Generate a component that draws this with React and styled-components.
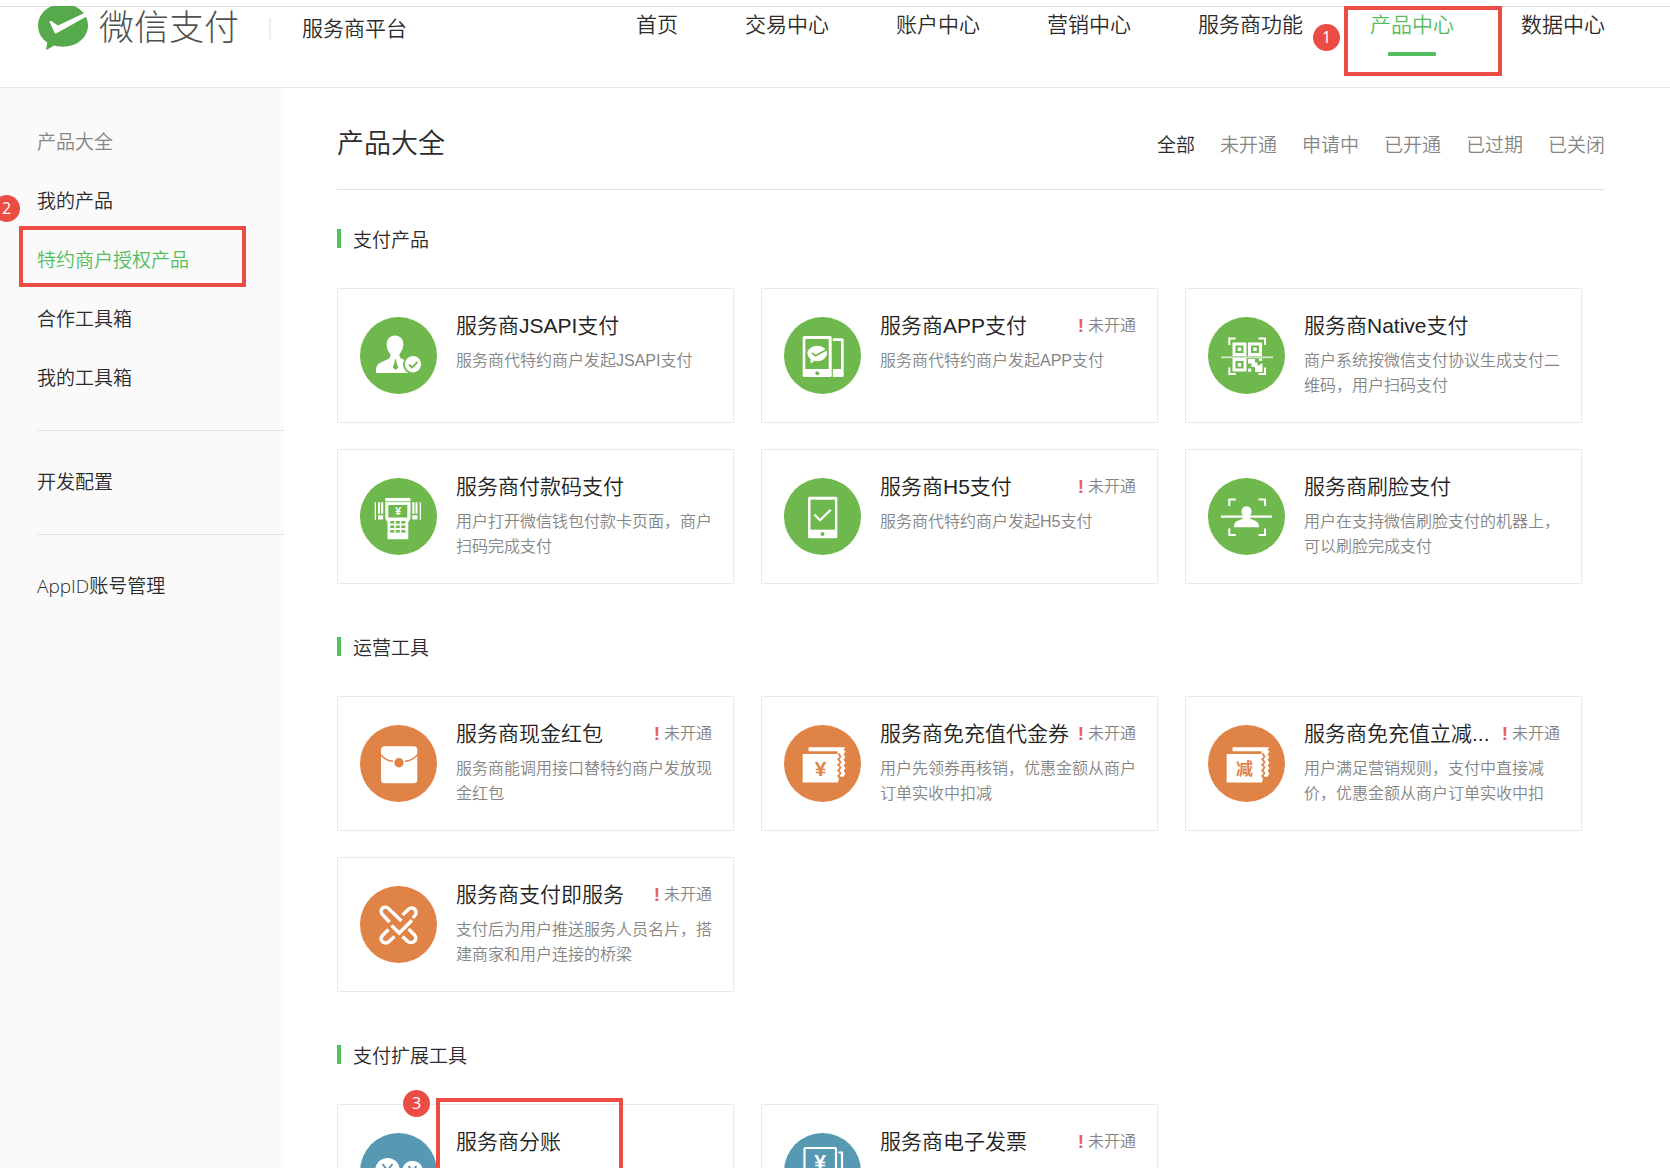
import React from 'react'
import styled, { createGlobalStyle, ThemeProvider } from 'styled-components'

const theme = {
    colors: {
        green: '#54bd60',
        iconGreen: '#6fb84d',
        iconOrange: '#e08346',
        iconBlue: '#5798b2',
        red: '#eb4d45',
        text: '#2b2b2b',
        muted: '#858585',
        line: '#e0e0e2',
        cardLine: '#e9e9ee',
    },
}

const GlobalStyle = createGlobalStyle`
    * {
        box-sizing: border-box;
    }

    body {
        margin: 0;
        background: #fff;
        color: #2b2b2b;
        font-family: "Liberation Sans", "Noto Sans CJK SC", sans-serif;
        font-weight: 350;
    }

    ul {
        list-style: none;
        margin: 0;
        padding: 0;
    }

    a {
        color: inherit;
        text-decoration: none;
    }
`

const Page = styled.div`
    min-height: 100vh;
    display: flex;
    flex-direction: column;
    padding-top: 6px;
    overflow-x: hidden;
`

const Header = styled.header`
    flex: none;
    display: flex;
    justify-content: space-between;
    align-items: flex-start;
    height: 82px;
    padding: 0 65px 0 38px;
    border-top: 1px solid ${p => p.theme.colors.line};
    border-bottom: 1px solid ${p => p.theme.colors.cardLine};
`

const Brand = styled.a`
    display: flex;
    align-items: center;
    height: 42px;
`

const Wordmark = styled.span`
    margin-left: 11px;
    font-size: 35px;
    line-height: 40px;
    font-weight: 300;
    color: #505050;
`

const Platform = styled.span`
    margin-left: 30px;
    padding-left: 31px;
    border-left: 2px solid #ececec;
    font-size: 21px;
    line-height: 21px;
`

const NavList = styled.ul`
    display: flex;
    gap: 67px;
`

const NavItem = styled.li`
    position: relative;
`

const NavLink = styled.a`
    display: flex;
    flex-direction: column;
    align-items: center;
    font-size: 21px;
    line-height: 36px;
    white-space: nowrap;
    color: ${p => p.$active ? p.theme.colors.green : 'inherit'};
`

const Underline = styled.span`
    width: 48px;
    height: 4px;
    margin-top: 9px;
    border-radius: 1px;
    background: ${p => p.theme.colors.green};
`

// numbered steps drawn over the page
const StepFrame = styled.span`
    position: absolute;
    z-index: 1;
    left: ${p => p.$left}px;
    top: ${p => p.$top}px;
    width: ${p => p.$width}px;
    height: ${p => p.$height}px;
    border: 4px solid ${p => p.theme.colors.red};
    pointer-events: none;
`

const StepBadge = styled.span`
    position: absolute;
    z-index: 1;
    left: ${p => p.$left}px;
    top: ${p => p.$top}px;
    width: 27px;
    height: 27px;
    border-radius: 50%;
    background: ${p => p.theme.colors.red};
    color: #fff;
    font-family: "Open Sans", sans-serif;
    font-size: 16px;
    font-weight: 400;
    line-height: 27px;
    text-align: center;
`

const Body = styled.div`
    flex: 1;
    display: flex;
`

const Sidebar = styled.nav`
    flex: none;
    width: 284px;
    padding: 25px 0 0 37px;
    background: #fafafa;
    font-family: "Open Sans", "Noto Sans CJK SC", sans-serif;
`

const SideGroup = styled.ul`
    & + & {
        margin-top: 22px;
        padding-top: 22px;
        border-top: 1px solid #e4e4e6;
    }
`

const SideItem = styled.li`
    position: relative;
    font-size: 19px;
    line-height: 59px;
    color: ${p => p.$heading ? p.theme.colors.muted : p.$active ? p.theme.colors.green : 'inherit'};
`

const Main = styled.main`
    flex: 1;
    min-width: 0;
    padding: 0 65px 0 53px;
`

const TitleBar = styled.div`
    display: flex;
    justify-content: space-between;
    align-items: center;
    height: 102px;
    padding-top: 11px;
    border-bottom: 1px solid ${p => p.theme.colors.line};
`

const PageTitle = styled.h1`
    margin: 0;
    font-size: 27px;
    line-height: 36px;
    font-weight: 350;
`

const Filters = styled.div`
    display: flex;
    gap: 25px;
    padding-top: 4px;
`

const Filter = styled.button`
    padding: 0;
    border: 0;
    background: none;
    font: inherit;
    font-size: 19px;
    line-height: 28px;
    color: ${p => p.$active ? p.theme.colors.text : p.theme.colors.muted};
`

const Section = styled.section`
    padding: 36px 23px 0 0;
`

const SectionTitle = styled.h2`
    display: flex;
    align-items: center;
    gap: 12px;
    height: 25px;
    margin: 0 0 37px;
    font-size: 19px;
    font-weight: 350;

    &::before {
        content: "";
        width: 4px;
        height: 19px;
        background: ${p => p.theme.colors.green};
    }
`

const Grid = styled.div`
    display: grid;
    grid-template-columns: repeat(3, 1fr);
    gap: 26px 27px;
    margin-bottom: 14px;
`

const Card = styled.article`
    position: relative;
    display: flex;
    gap: 19px;
    height: 135px;
    padding: 0 21px 0 22px;
    border: 1px solid ${p => p.theme.colors.cardLine};
`

const IconSvg = styled.svg`
    flex: none;
    align-self: center;
    width: 77px;
    height: 77px;
`

const CardBody = styled.div`
    flex: 1;
    min-width: 0;
    padding-top: 22px;
`

const CardHead = styled.div`
    display: flex;
    justify-content: space-between;
    align-items: center;
    height: 30px;
`

const CardTitle = styled.h3`
    margin: 0;
    font-size: 21px;
    line-height: 30px;
    font-weight: 350;
    color: #222;
    white-space: nowrap;
`

const Status = styled.span`
    display: flex;
    align-items: center;
    gap: 4px;
    font-size: 16px;
    line-height: 30px;
    color: ${p => p.theme.colors.muted};
    white-space: nowrap;
`

const Mark = styled.b`
    font-size: 19px;
    color: #e8605f;
`

const Desc = styled.p`
    margin: 7px 0 0;
    font-size: 16px;
    line-height: 25px;
    color: ${p => p.theme.colors.muted};
`

const Logo = () => (
    <svg width="50" height="44" viewBox="0 0 50 44" aria-hidden="true">
        <path
            d="M14 0H36C44.5 3.5 50 11 50 19.5C50 31.5 39 40.7 25 40.7C21.5 40.7 18.5 40.3 16 39.5L9.5 43.6C8.5 44 8 43.5 8.2 42.7L9.3 36.5C3.5 32.5 0 26.5 0 19.5C0 11 5.5 3.5 14 0Z"
            fill="#57aa4b"
        />
        <path d="M11.3 15.5C12.5 14.5 13.5 15 14.5 15.8L20 19.5L47.5 6.5L49.5 10L18.5 27.3C17.5 27.8 17 27.5 16.5 26.5Z" fill="#fff" />
    </svg>
)

const PersonIcon = ({ bg }) => (
    <>
        <path d="M35 18.5c5 0 8.500 3.700 8.300 9c-.2 5-2.500 7.500-3.800 9.500c-.3 3 1 4.500 4 5.500l5 3v10.500H16.200c-1-6 1.300-9 5-10.700l6-2.800c3-1.300 3.500-3 3.200-5.500c-1.500-2-3.600-4.500-3.700-9.500c-.1-5.300 3.300-9 8.300-9z" fill="#fff" />
        <path d="M34.5 42.5h2l-.3 2l2 6l-2.700 2.500l-2.700-2.500l2-6z" fill={bg} />
        <circle cx="53" cy="47.3" r="10" fill={bg} />
        <circle cx="53" cy="47.3" r="8.2" fill="#fff" />
        <path d="M49 47.5l3 3l5.500-5.500" fill="none" stroke={bg} strokeWidth="1.8" />
    </>
)

const PhonesIcon = ({ bg }) => (
    <>
        <rect x="45" y="21.3" width="14.7" height="38.7" rx="1.5" fill="#fff" />
        <rect x="45" y="24" width="12" height="28" fill={bg} />
        <rect x="46" y="19" width="2.8" height="42" fill={bg} />
        <rect x="18.7" y="19" width="29" height="41" rx="1.5" fill="#fff" />
        <rect x="21.3" y="22" width="23.4" height="30" fill={bg} />
        <path d="M26.5 42.5v4l4-2.300z" fill="#fff" />
        <ellipse cx="33.2" cy="36.5" rx="9.8" ry="7.8" fill="#fff" />
        <path d="M28 36l3.500 2.700l11-6" fill="none" stroke={bg} strokeWidth="1.7" />
        <circle cx="33.3" cy="56.2" r="2" fill={bg} />
    </>
)

const Corners = () => (
    <path
        d="M21.3 28v-6.500h6.500M50.5 21.5h6.500v6.500M57 50.5v6.500h-6.500M27.8 57h-6.500v-6.500"
        fill="none"
        stroke="#fff"
        strokeWidth="2"
    />
)

const QrIcon = () => (
    <>
        <Corners />
        <g fill="none" stroke="#fff" strokeWidth="3">
            <rect x="26" y="27" width="11" height="10.5" />
            <rect x="41.5" y="27" width="11" height="10.5" />
            <rect x="26" y="42.5" width="11" height="10.5" />
        </g>
        <g fill="#fff">
            <rect x="29.8" y="30.5" width="3.5" height="3.5" />
            <rect x="45.2" y="30.5" width="3.5" height="3.5" />
            <rect x="29.8" y="46" width="3.5" height="3.5" />
            <path d="M40 42h7v3.500h2.500v3.500l5-3v9h-7.500v-5h-3.500v-3.500H40z" />
            <rect x="51" y="41.5" width="3.2" height="2.5" />
            <rect x="40" y="51.5" width="3.2" height="3.2" />
            <rect x="13" y="39.3" width="52" height="2" opacity=".65" />
        </g>
    </>
)

const TerminalIcon = ({ bg }) => (
    <>
        <path d="M26.3 20h23.200c.6 0 1 .4 1 1v19.500l-2.200 3.500v17.300H27.5V44l-2.200-3.500V21c0-.6.4-1 1-1z" fill="#fff" />
        <path d="M25.3 23.7h25.200" stroke={bg} strokeWidth=".8" />
        <rect x="28.3" y="27" width="19" height="12.5" fill={bg} />
        <text x="38" y="37.3" fill="#fff" fontSize="11" fontWeight="700" textAnchor="middle">¥</text>
        <g fill={bg}>
            {[43, 47.5, 52].map(y => [30.3, 35.8, 41.3].map(x => (
                <rect key={`${x}-${y}`} x={x} y={y} width="4" height="2.6" />
            )))}
        </g>
        <g fill="#fff">
            <path d="M14.7 24.3h1.300v17.400h-1.300zM18 24.3h2v11.500h-2zM21 24.3h2.200v11.500H21zM18 37.3h5.200v4.300H18z" />
            <path d="M59.7 24.3H61v17.400h-1.300zM52.3 24.3h2.200v11.500h-2.200zM55.5 24.3h2v11.500h-2zM52.3 37.3h5.200v4.300h-5.200z" />
        </g>
    </>
)

const PhoneCheckIcon = ({ bg }) => (
    <>
        <rect x="24" y="18.7" width="29.3" height="41.6" rx="1.5" fill="#fff" />
        <rect x="26.5" y="21.7" width="24.5" height="30" fill={bg} />
        <path d="M30.3 36.5l5.700 5.700l10.800-10.500" fill="none" stroke="#fff" strokeWidth="2.2" />
        <circle cx="38.5" cy="56" r="2" fill={bg} />
    </>
)

const FaceIcon = () => (
    <>
        <Corners />
        <path d="M13 38.7h51" stroke="#fff" strokeWidth="2.2" />
        <path d="M38.5 28.3c3 0 5 2 5 5c0 3-1.200 4.500-2 5.500c.2 2 1.500 2.500 4.500 3.500c3.500 1.200 5 3 5 7H26c0-4 1.500-5.800 5-7c3-1 4.300-1.500 4.500-3.500c-.8-1-2-2.500-2-5.500c0-3 2-5 5-5z" fill="#fff" />
    </>
)

const PacketIcon = ({ bg }) => (
    <>
        <rect x="21" y="21.3" width="36.3" height="37" rx="3.5" fill="#fff" />
        <path d="M20.5 29.5Q26 36 33 36.2M57.8 29.5Q52 36 45 36.2" fill="none" stroke={bg} strokeWidth="1.5" />
        <circle cx="39" cy="37.7" r="4.7" fill={bg} />
    </>
)

const LinkIcon = () => (
    <g fill="none" stroke="#fff" strokeWidth="3.4">
        <path d="M29.5 36L22.5 28.5C18 23.5 25 18.5 29 23L41.5 35" />
        <path d="M42.5 29L48.5 23.2C53 19 58.5 25.5 55 29.5L52.8 32" />
        <path d="M31.5 39.5L39.3 47L52 34.2" />
        <path d="M28.5 43.5L22.5 49.5C18 54.5 25 59.5 29 55.5L34.5 50.5" />
        <path d="M42.5 50.5L47.5 55.3C52.5 59.5 58.5 53 54.5 49L48.5 43" />
    </g>
)

const Ticket = ({ bg, label, size, baseline }) => (
    <>
        <path d="M24.5 22.3h37l-2 2.500l2 2l-2 2.500l2 3l-2 2.500l2 3l-2 2.500l2 3l-2 2.500l2 3l-2 3h-6V26.3h-29z" fill="#fff" />
        <path d="M18.7 30c0-.6.4-1 1-1H53l2 2.500l-2 3l2 2.500l-2 3l2 2.500l-2 3l2 2.500l-2 3l2 2.500l-1 4H18.7z" fill="#fff" />
        <path d="M54.5 28.5l2 3l-2 3l2 2.500l-2 3l2 2.500l-2 3l2 2.500l-2 3l2 2.500" fill="none" stroke={bg} strokeWidth="1.8" />
        <text x="36.5" y={baseline} fill={bg} fontSize={size} fontWeight="700" textAnchor="middle">{label}</text>
    </>
)

const CouponIcon = ({ bg }) => <Ticket bg={bg} label="¥" size="21" baseline="50.5" />
const DiscountIcon = ({ bg }) => <Ticket bg={bg} label="减" size="17" baseline="49.5" />

const SplitIcon = ({ bg }) => (
    <>
        <circle cx="27.5" cy="37.3" r="12.3" fill="#fff" />
        <circle cx="52.5" cy="38.2" r="10.5" fill="#fff" />
        <g fill="none" stroke={bg} strokeWidth="2">
            <path d="M22.5 31l5 6.500l5-6.500M27.5 37.5v9M23 39h9M23 43h9" />
            <path d="M48.5 33l4 5l4-5M52.5 38v8M49 40h7M49 43.5h7" />
        </g>
    </>
)

const InvoiceIcon = () => (
    <>
        <g fill="none" stroke="#fff" strokeWidth="2.2">
            <rect x="20.5" y="15" width="31.5" height="42" rx="1" />
            <path d="M54.5 19.5h3.500v34h-3.500M27 44h18M27 50h18" />
        </g>
        <text x="36" y="35.5" fill="#fff" fontSize="21" fontWeight="700" textAnchor="middle">¥</text>
    </>
)

const navItems = ['首页', '交易中心', '账户中心', '营销中心', '服务商功能', '产品中心', '数据中心']

const filters = ['全部', '未开通', '申请中', '已开通', '已过期', '已关闭']

const sections = [
    {
        title: '支付产品',
        color: theme.colors.iconGreen,
        items: [
            { title: '服务商JSAPI支付', desc: '服务商代特约商户发起JSAPI支付', icon: PersonIcon },
            { title: '服务商APP支付', desc: '服务商代特约商户发起APP支付', icon: PhonesIcon, closed: true },
            { title: '服务商Native支付', desc: '商户系统按微信支付协议生成支付二维码，用户扫码支付', icon: QrIcon },
            { title: '服务商付款码支付', desc: '用户打开微信钱包付款卡页面，商户扫码完成支付', icon: TerminalIcon },
            { title: '服务商H5支付', desc: '服务商代特约商户发起H5支付', icon: PhoneCheckIcon, closed: true },
            { title: '服务商刷脸支付', desc: '用户在支持微信刷脸支付的机器上，可以刷脸完成支付', icon: FaceIcon },
        ],
    },
    {
        title: '运营工具',
        color: theme.colors.iconOrange,
        items: [
            { title: '服务商现金红包', desc: '服务商能调用接口替特约商户发放现金红包', icon: PacketIcon, closed: true },
            { title: '服务商免充值代金券', desc: '用户先领券再核销，优惠金额从商户订单实收中扣减', icon: CouponIcon, closed: true },
            { title: '服务商免充值立减...', desc: '用户满足营销规则，支付中直接减价，优惠金额从商户订单实收中扣', icon: DiscountIcon, closed: true },
            { title: '服务商支付即服务', desc: '支付后为用户推送服务人员名片，搭建商家和用户连接的桥梁', icon: LinkIcon, closed: true },
        ],
    },
    {
        title: '支付扩展工具',
        color: theme.colors.iconBlue,
        items: [
            { title: '服务商分账', icon: SplitIcon, step: 3 },
            { title: '服务商电子发票', icon: InvoiceIcon, closed: true },
        ],
    },
]

const ProductCard = ({ item, color }) => {
    const Icon = item.icon
    return (
        <Card>
            <IconSvg viewBox="0 0 77 77" aria-hidden="true">
                <circle cx="38.5" cy="38.5" r="38.5" fill={color} />
                <Icon bg={color} />
            </IconSvg>
            <CardBody>
                <CardHead>
                    <CardTitle>{item.title}</CardTitle>
                    {item.closed && <Status><Mark>!</Mark>未开通</Status>}
                </CardHead>
                {item.desc && <Desc>{item.desc}</Desc>}
            </CardBody>
            {item.step && (
                <>
                    <StepBadge $left={65} $top={-15}>{item.step}</StepBadge>
                    <StepFrame $left={98} $top={-7} $width={187} $height={96} />
                </>
            )}
        </Card>
    )
}

const App = () => (
    <ThemeProvider theme={theme}>
        <GlobalStyle />
        <Page>
            <Header>
                <Brand href="#">
                    <Logo />
                    <Wordmark>微信支付</Wordmark>
                    <Platform>服务商平台</Platform>
                </Brand>
                <nav>
                    <NavList>
                        {navItems.map(name => {
                            const active = name === '产品中心'
                            return (
                                <NavItem key={name}>
                                    <NavLink href="#" $active={active}>
                                        {name}
                                        {active && <Underline />}
                                    </NavLink>
                                    {active && (
                                        <>
                                            <StepBadge $left={-57} $top={17}>1</StepBadge>
                                            <StepFrame $left={-26} $top={-1} $width={158} $height={70} />
                                        </>
                                    )}
                                </NavItem>
                            )
                        })}
                    </NavList>
                </nav>
            </Header>
            <Body>
                <Sidebar>
                    <SideGroup>
                        <SideItem $heading>产品大全</SideItem>
                        <SideItem><a href="#">我的产品</a></SideItem>
                        <SideItem $active>
                            <a href="#">特约商户授权产品</a>
                            <StepBadge $left={-44} $top={-36}>2</StepBadge>
                            <StepFrame $left={-18} $top={-5} $width={227} $height={61} />
                        </SideItem>
                        <SideItem><a href="#">合作工具箱</a></SideItem>
                        <SideItem><a href="#">我的工具箱</a></SideItem>
                    </SideGroup>
                    <SideGroup>
                        <SideItem><a href="#">开发配置</a></SideItem>
                    </SideGroup>
                    <SideGroup>
                        <SideItem><a href="#">AppID账号管理</a></SideItem>
                    </SideGroup>
                </Sidebar>
                <Main>
                    <TitleBar>
                        <PageTitle>产品大全</PageTitle>
                        <Filters>
                            {filters.map((name, i) => (
                                <Filter key={name} type="button" $active={i === 0}>{name}</Filter>
                            ))}
                        </Filters>
                    </TitleBar>
                    {sections.map(section => (
                        <Section key={section.title}>
                            <SectionTitle>{section.title}</SectionTitle>
                            <Grid>
                                {section.items.map(item => (
                                    <ProductCard key={item.title} item={item} color={section.color} />
                                ))}
                            </Grid>
                        </Section>
                    ))}
                </Main>
            </Body>
        </Page>
    </ThemeProvider>
)

export default App
